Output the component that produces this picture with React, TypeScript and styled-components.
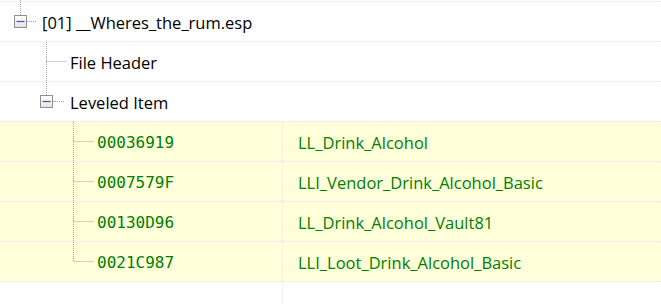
import React from 'react'
import styled, { createGlobalStyle } from 'styled-components'

const GlobalStyle = createGlobalStyle`
    body {
        margin: 0;
        background: #ffffff;
        font-family: 'Open Sans', 'Noto Sans', sans-serif;
    }
`

type Node = {
    level: number
    expander?: boolean
    last?: boolean
    label: string
    formId?: string
    editorId?: string
}

const nodes: Node[] = [
    { level: 0, expander: true, last: true, label: '[01] __Wheres_the_rum.esp' },
    { level: 1, label: 'File Header' },
    { level: 1, expander: true, last: true, label: 'Leveled Item' },
    { level: 2, label: '', formId: '00036919', editorId: 'LL_Drink_Alcohol' },
    { level: 2, label: '', formId: '0007579F', editorId: 'LLI_Vendor_Drink_Alcohol_Basic' },
    { level: 2, label: '', formId: '00130D96', editorId: 'LL_Drink_Alcohol_Vault81' },
    { level: 2, last: true, label: '', formId: '0021C987', editorId: 'LLI_Loot_Drink_Alcohol_Basic' },
]

const lineX = [20, 46, 73]
const textX = [42, 70, 97]
const MID = 19.5
const ROW_H = 39

const Gutter: React.FC<{ node: Node; first: boolean }> = ({ node, first }) => {
    const x = lineX[node.level] + 0.5
    const w = textX[node.level]
    const top = first ? -2 : 0
    if (node.expander) {
        const bx = lineX[node.level] - 6
        const by = 13
        return (
            <GutterSvg width={w} height={ROW_H}>
                <defs>
                    <linearGradient id={`exp${node.level}`} x1="0" y1="0" x2="0" y2="1">
                        <stop offset="0" stopColor="#ffffff" />
                        <stop offset="1" stopColor="#e2e2e2" />
                    </linearGradient>
                </defs>
                <line x1={x} y1={top} x2={x} y2={by} stroke="#a0a0a0" strokeDasharray="1 1" />
                {!node.last && <line x1={x} y1={by + 13} x2={x} y2={ROW_H} stroke="#a0a0a0" strokeDasharray="1 1" />}
                <line x1={bx + 13} y1={MID} x2={w - 6} y2={MID} stroke="#a0a0a0" strokeDasharray="1 1" />
                <rect x={bx + 0.5} y={by + 0.5} width={12} height={12} fill={`url(#exp${node.level})`} stroke="#8f8f8f" />
                <line x1={bx + 2.5} y1={MID} x2={bx + 10.5} y2={MID} stroke="#3b5a9a" strokeWidth={1.2} />
            </GutterSvg>
        )
    }
    return (
        <GutterSvg width={w} height={ROW_H}>
            <line x1={x} y1={top} x2={x} y2={node.last ? MID + 0.5 : ROW_H + 1} stroke="#a0a0a0" strokeDasharray="1 1" />
            <line x1={x} y1={MID} x2={w - 3} y2={MID} stroke="#a0a0a0" strokeDasharray="1 1" />
        </GutterSvg>
    )
}

const App: React.FC = () => {
    return (
        <>
            <GlobalStyle />
            <Tree>
                <Stub />
                {nodes.map((n, i) => (
                    <Row key={i} $record={!!n.formId}>
                        <NameCell $split={!!n.formId}>
                            <Gutter node={n} first={i === 0} />
                            {n.formId ? <FormId>{n.formId}</FormId> : <Label>{n.label}</Label>}
                        </NameCell>
                        {n.editorId && <EditorCell>{n.editorId}</EditorCell>}
                    </Row>
                ))}
                <Row $record={false} $empty>
                    <NameCell $split />
                    <EditorCell />
                </Row>
            </Tree>
        </>
    )
}

const Tree = styled.div`
    width: 661px;
    height: 304px;
    overflow: hidden;
    background: #ffffff;
`

const Stub = styled.div`
    height: 1px;
    border-bottom: 1px dotted #e4e4e4;
`

const Row = styled.div<{ $record: boolean; $empty?: boolean }>`
    display: flex;
    height: ${ROW_H}px;
    background: ${p => (p.$record ? '#ffffda' : '#ffffff')};
    border-bottom: 1px dotted ${p => (p.$empty ? 'transparent' : '#e4e4e4')};
`

const NameCell = styled.div<{ $split: boolean }>`
    display: flex;
    align-items: center;
    width: ${p => (p.$split ? '282px' : '100%')};
    flex-shrink: 0;
    border-right: ${p => (p.$split ? '1px dotted #e4e4e4' : 'none')};
`

const GutterSvg = styled.svg`
    flex-shrink: 0;
    overflow: visible;
    display: block;
`

const Label = styled.span`
    font-size: 16.5px;
    color: #000000;
    white-space: nowrap;
    padding-top: 2px;
`

const FormId = styled.span`
    font-family: 'DejaVu Sans Mono', 'Liberation Mono', monospace;
    font-size: 16px;
    color: #008000;
    padding-top: 2px;
`

const EditorCell = styled.div`
    display: flex;
    align-items: center;
    flex: 1;
    padding-left: 15px;
    padding-top: 2px;
    font-size: 16.5px;
    color: #008000;
    white-space: nowrap;
`

export default App
